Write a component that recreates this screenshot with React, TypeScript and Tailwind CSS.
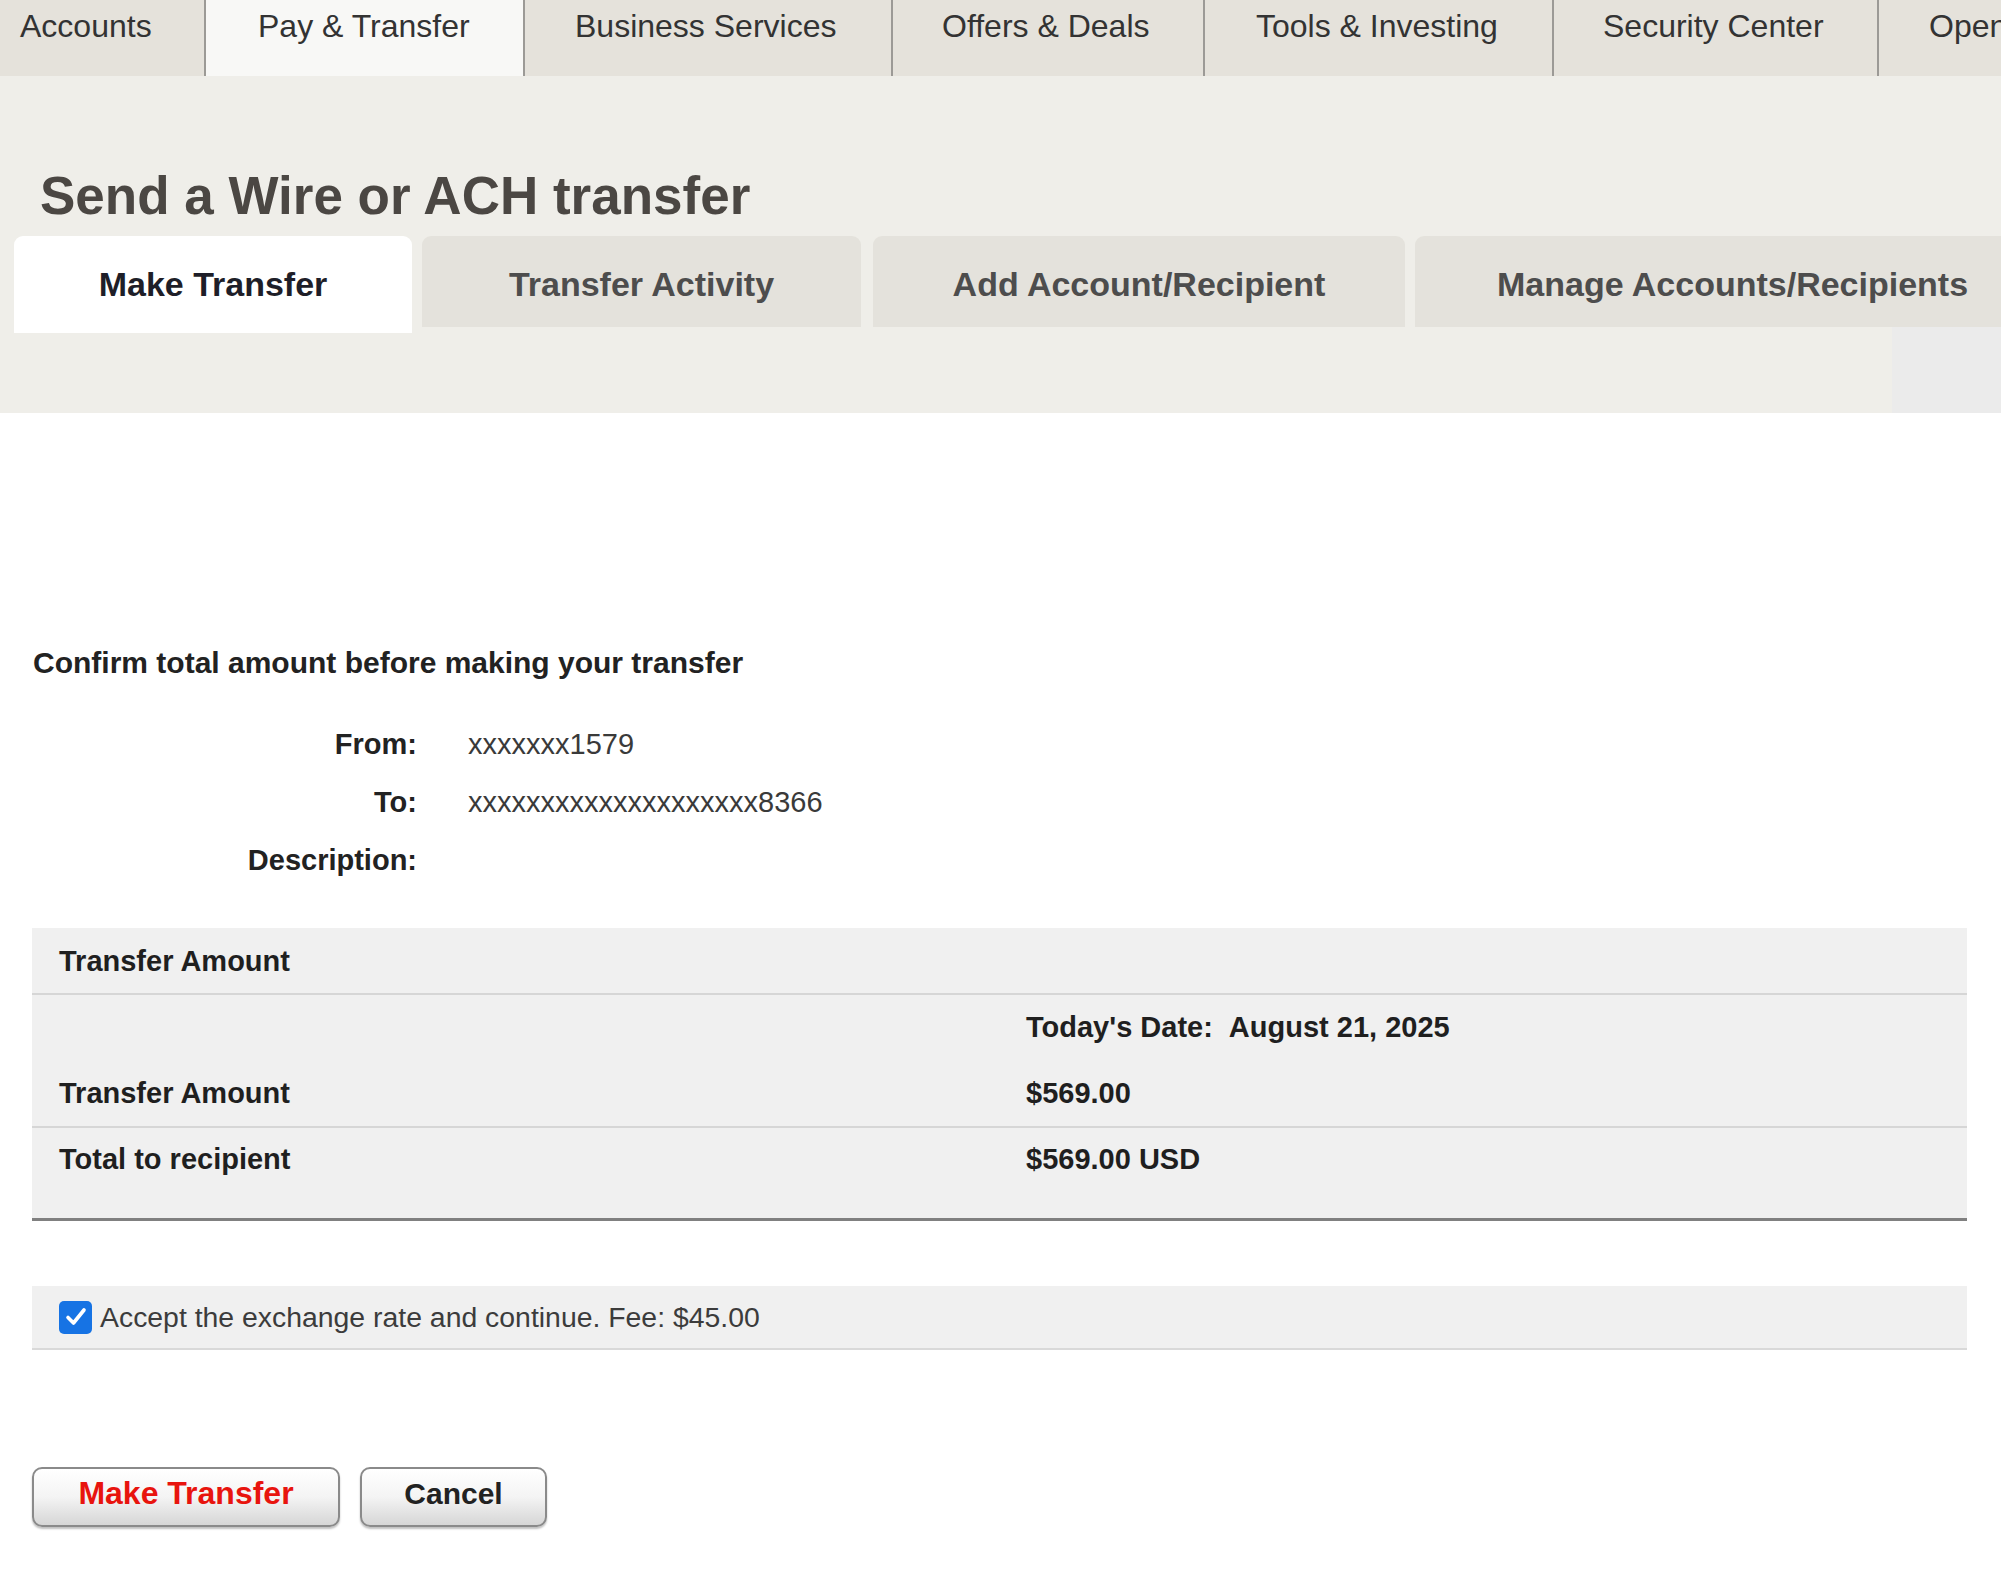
import React from "react";

const navTabs = [
  { label: "Accounts", w: "w-[204px]", pl: "pl-[20px]", active: false, first: true },
  { label: "Pay & Transfer", w: "w-[319px]", pl: "pl-[52px]", active: true, first: false },
  { label: "Business Services", w: "w-[368px]", pl: "pl-[50px]", active: false, first: false },
  { label: "Offers & Deals", w: "w-[312px]", pl: "pl-[49px]", active: false, first: false },
  { label: "Tools & Investing", w: "w-[349px]", pl: "pl-[51px]", active: false, first: false },
  { label: "Security Center", w: "w-[325px]", pl: "pl-[49px]", active: false, first: false },
  { label: "Open an Account", w: "w-[300px]", pl: "pl-[50px]", active: false, first: false },
];

function NavTab({ t }: { t: (typeof navTabs)[number] }) {
  return (
    <div
      className={`${t.w} ${t.pl} shrink-0 flex items-start pt-[10px] whitespace-nowrap overflow-hidden text-[32px] leading-[32px] text-[#333333] ${
        t.first ? "" : "border-l-2 border-[#9c9a96]"
      } ${t.active ? "bg-[#f8f8f6] h-[77px]" : "h-[76px]"}`}
    >
      {t.label}
    </div>
  );
}

function Checkbox() {
  return (
    <div className="w-[33px] h-[33px] rounded-[5px] bg-[#1673e4] flex items-center justify-center shrink-0">
      <svg width="24" height="24" viewBox="0 0 24 24" fill="none">
        <path d="M4 12.5 L9.5 18 L20 5" stroke="white" strokeWidth="3.6" strokeLinecap="round" strokeLinejoin="round" />
      </svg>
    </div>
  );
}

export default function App() {
  return (
    <div className="w-[2001px] h-[1585px] overflow-hidden bg-white font-['Liberation_Sans',Arial,sans-serif]">
      {/* Top navigation */}
      <div className="flex h-[76px] bg-[#e5e2db] overflow-hidden relative z-10">
        {navTabs.map((t) => (
          <NavTab key={t.label} t={t} />
        ))}
      </div>

      {/* Header area */}
      <div className="bg-[#efeee9] h-[337px] flex flex-col">
        <h1 className="pt-[94px] pl-[40px] text-[53px] leading-[52px] font-bold text-[#4b4743] whitespace-nowrap">
          Send a Wire or ACH transfer
        </h1>
        <div className="mt-[14px] pl-[14px] flex items-start h-[91px] overflow-visible">
          <div className="w-[398px] h-[97px] shrink-0 bg-white rounded-t-[9px] flex items-center justify-center pb-[1px] text-[34px] font-bold text-[#1e1e28] whitespace-nowrap relative z-10">
            Make Transfer
          </div>
          <div className="ml-[10px] w-[439px] h-[91px] shrink-0 bg-[#e4e2dc] rounded-t-[9px] flex items-center justify-center pt-[5px] text-[34px] font-bold text-[#4d4d4d] whitespace-nowrap">
            Transfer Activity
          </div>
          <div className="ml-[12px] w-[532px] h-[91px] shrink-0 bg-[#e4e2dc] rounded-t-[9px] flex items-center justify-center pt-[5px] text-[34px] font-bold text-[#4d4d4d] whitespace-nowrap">
            Add Account/Recipient
          </div>
          <div className="ml-[10px] w-[640px] h-[91px] shrink-0 bg-[#e4e2dc] rounded-t-[9px] flex items-center pl-[82px] pt-[5px] text-[34px] font-bold text-[#4d4d4d] whitespace-nowrap">
            Manage Accounts/Recipients
          </div>
        </div>
        <div className="flex justify-end flex-1">
          <div className="w-[109px] bg-[#ebebeb]" />
        </div>
      </div>

      {/* Content */}
      <div className="px-[32px] pt-[232px]">
        <div className="text-[30px] leading-[36px] font-bold text-[#222222] whitespace-nowrap pl-[1px]">
          Confirm total amount before making your transfer
        </div>

        <div className="mt-[45px] grid grid-cols-[385px_1fr] gap-x-[51px] gap-y-[22px] text-[29px] leading-[36px]">
          <div className="text-right font-bold text-[#222222]">From:</div>
          <div className="text-[#3a3a3a]">xxxxxxx1579</div>
          <div className="text-right font-bold text-[#222222]">To:</div>
          <div className="text-[#3a3a3a]">xxxxxxxxxxxxxxxxxxxx8366</div>
          <div className="text-right font-bold text-[#222222]">Description:</div>
          <div />
        </div>

        {/* Transfer amount table */}
        <div className="mt-[50px] w-[1935px] bg-[#f0f0f0] border-b-[3px] border-[#808080] text-[29px] leading-[36px] text-[#1f1f1f]">
          <div className="h-[67px] flex items-center pl-[27px] font-bold border-b-2 border-[#d6d6d6]">
            Transfer Amount
          </div>
          <div className="h-[64px] flex items-center">
            <div className="w-[994px] shrink-0" />
            <div className="font-bold whitespace-nowrap">Today's Date:</div>
            <div className="ml-[16px] font-bold whitespace-nowrap">August 21, 2025</div>
          </div>
          <div className="h-[69px] flex items-center border-b-2 border-[#d6d6d6]">
            <div className="w-[994px] shrink-0 pl-[27px] font-bold">Transfer Amount</div>
            <div className="font-semibold">$569.00</div>
          </div>
          <div className="h-[90px] flex items-start pt-[13px]">
            <div className="w-[994px] shrink-0 pl-[27px] font-bold">Total to recipient</div>
            <div className="font-bold">$569.00 USD</div>
          </div>
        </div>

        {/* Accept row */}
        <div className="mt-[65px] w-[1935px] h-[64px] bg-[#f0f0f0] border-b-2 border-[#d9d9d9] flex items-center pl-[27px]">
          <Checkbox />
          <span className="ml-[8px] text-[28.4px] text-[#3c3c3c] whitespace-nowrap">
            Accept the exchange rate and continue. Fee: $45.00
          </span>
        </div>

        {/* Buttons */}
        <div className="mt-[117px] flex gap-[20px]">
          <button className="w-[308px] h-[60px] rounded-[10px] border-2 border-[#8a8a8a] bg-gradient-to-b from-white via-[#f4f4f4] to-[#d6d6d6] shadow-[0_2px_2px_rgba(0,0,0,0.25)] flex items-center justify-center pb-[8px] text-[32px] font-bold text-[#e8140e]">
            Make Transfer
          </button>
          <button className="w-[187px] h-[60px] rounded-[10px] border-2 border-[#8a8a8a] bg-gradient-to-b from-white via-[#f4f4f4] to-[#d6d6d6] shadow-[0_2px_2px_rgba(0,0,0,0.25)] flex items-center justify-center pb-[8px] text-[30px] font-bold text-[#222222]">
            Cancel
          </button>
        </div>
      </div>
    </div>
  );
}
